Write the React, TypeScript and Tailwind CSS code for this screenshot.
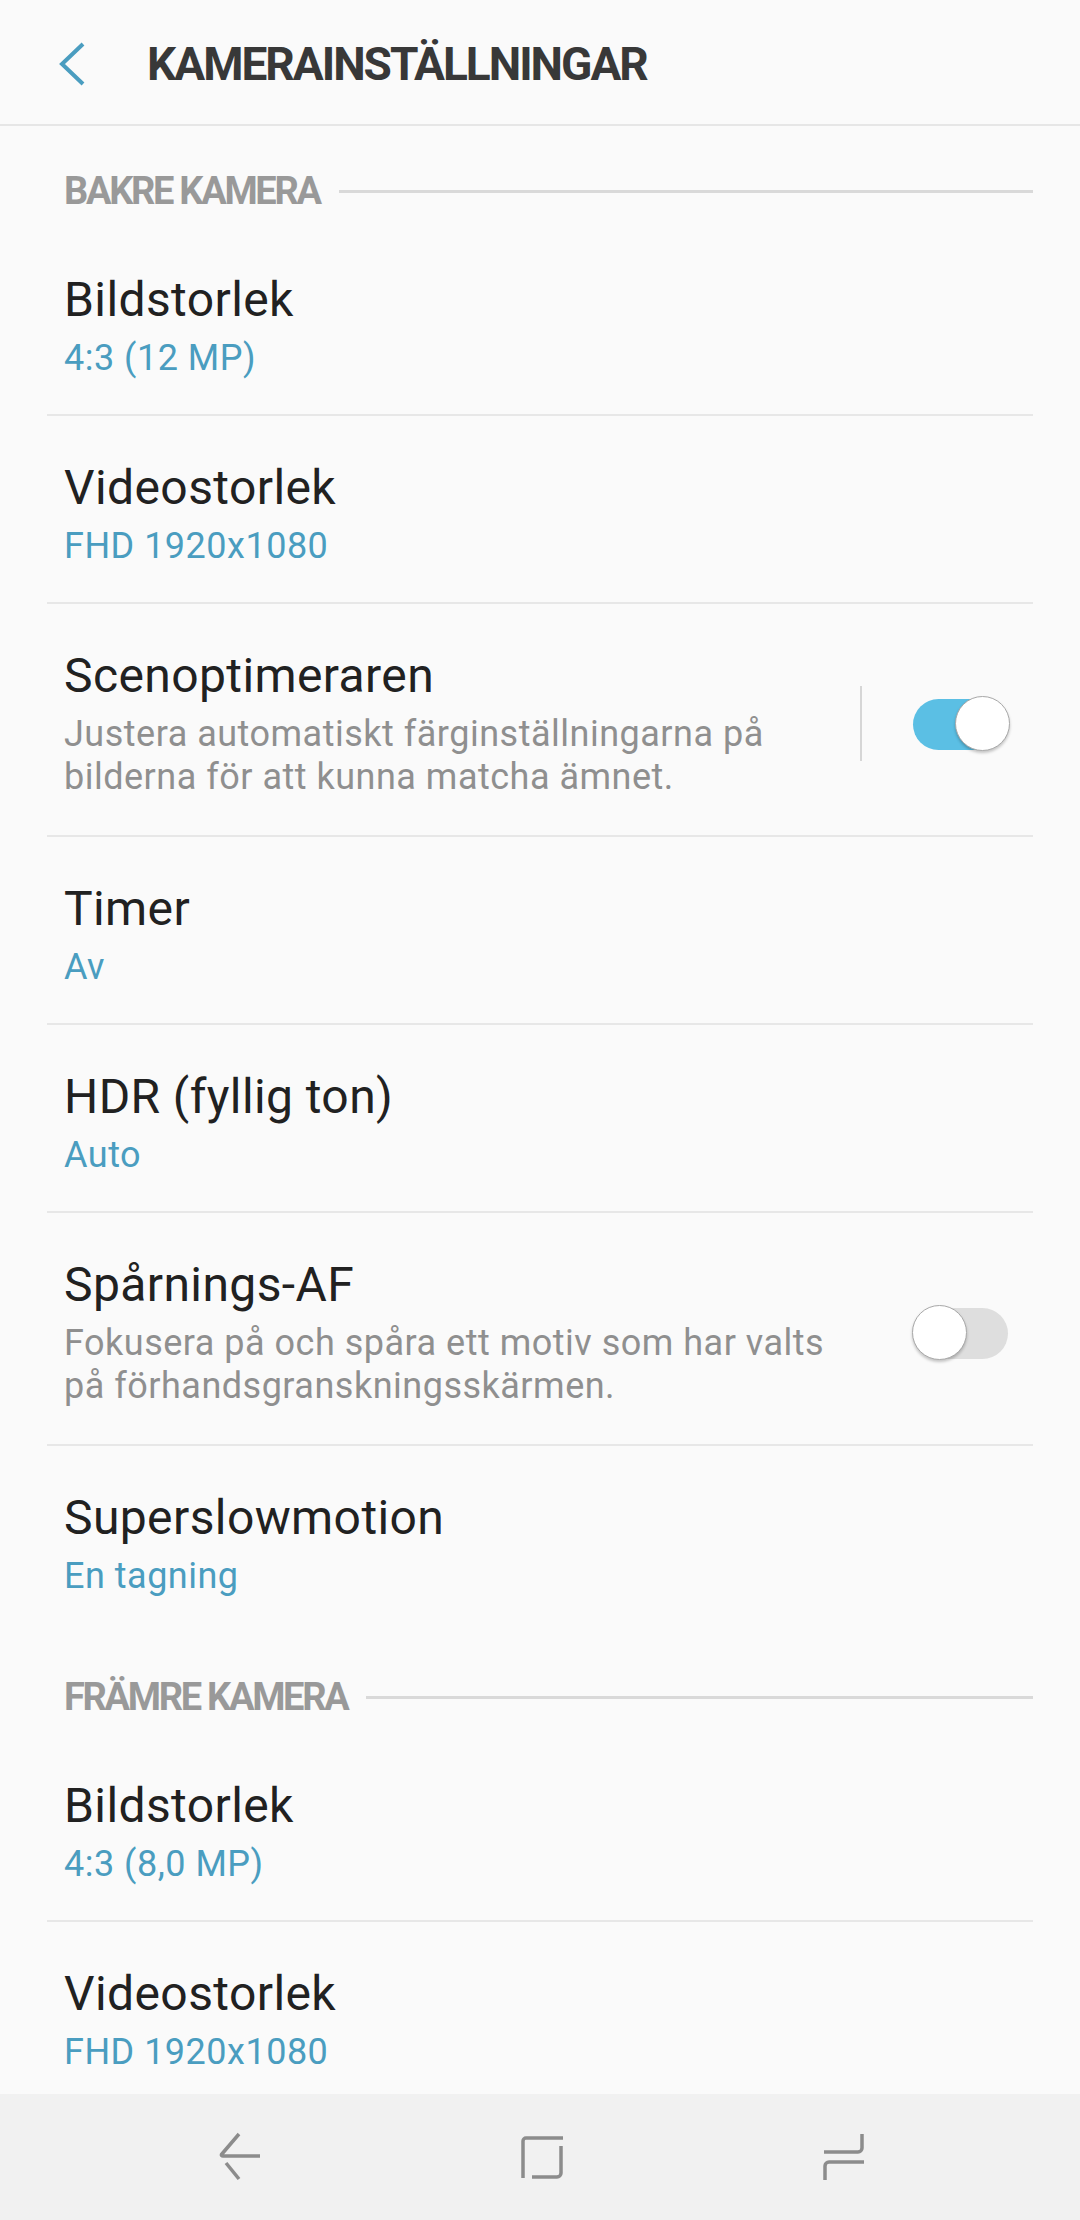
import { ReactNode } from "react";

type Row = {
  title: string;
  value?: string;
  desc?: ReactNode;
  toggle?: "on" | "off";
  separator?: boolean;
  last?: boolean;
};

const rear: Row[] = [
  { title: "Bildstorlek", value: "4:3 (12 MP)" },
  { title: "Videostorlek", value: "FHD 1920x1080" },
  {
    title: "Scenoptimeraren",
    desc: (
      <>
        Justera automatiskt färginställningarna på
        <br />
        bilderna för att kunna matcha ämnet.
      </>
    ),
    toggle: "on",
    separator: true,
  },
  { title: "Timer", value: "Av" },
  { title: "HDR (fyllig ton)", value: "Auto" },
  {
    title: "Spårnings-AF",
    desc: (
      <>
        Fokusera på och spåra ett motiv som har valts
        <br />
        på förhandsgranskningsskärmen.
      </>
    ),
    toggle: "off",
  },
  { title: "Superslowmotion", value: "En tagning", last: true },
];

const front: Row[] = [
  { title: "Bildstorlek", value: "4:3 (8,0 MP)" },
  { title: "Videostorlek", value: "FHD 1920x1080", last: true },
];

function Toggle({ on }: { on: boolean }) {
  return (
    <div className="relative w-[98px] h-[56px] shrink-0">
      <div
        className={`absolute left-[1px] right-[2px] top-[3px] bottom-[2px] rounded-full ${
          on ? "bg-[#5bbfe4]" : "bg-[#dedede]"
        }`}
      />
      <div
        className={`absolute top-0 w-[55px] h-[55px] rounded-full bg-white border border-[#a9a9a9] shadow-[0_2px_3px_rgba(0,0,0,0.22)] ${
          on ? "right-0" : "left-0"
        }`}
      />
    </div>
  );
}

function SectionHeader({ label }: { label: string }) {
  return (
    <div className="flex items-center pt-[48px] pb-[20px] pl-[64px] pr-[47px]">
      <span className="text-[38px] leading-[34px] font-bold tracking-[-2.3px] text-[#999999]">
        {label}
      </span>
      <div className="flex-1 h-[3px] bg-[#d9d9d9] ml-[19px]" />
    </div>
  );
}

function SettingRow({ row }: { row: Row }) {
  return (
    <div
      className={`mx-[47px] flex items-center pl-[17px] pr-[23px] pt-[44px] ${
        row.desc ? "pb-[36px]" : "pb-[34px]"
      } ${row.last ? "" : "border-b-2 border-[#e7e7e7]"}`}
    >
      <div className="flex-1 min-w-0">
        <div className="text-[48px] leading-[56px] tracking-[0.4px] text-[#212121]">{row.title}</div>
        {row.value && (
          <div className="mt-[9px] text-[36px] leading-[43px] tracking-[0.5px] text-[#4a9dc0]">
            {row.value}
          </div>
        )}
        {row.desc && (
          <div className="mt-[9px] text-[36px] leading-[43px] tracking-[0.5px] text-[#8f8f8f]">
            {row.desc}
          </div>
        )}
      </div>
      {row.separator && <div className="w-[2px] h-[75px] bg-[#d6d6d6] mr-[50px]" />}
      {row.toggle && <Toggle on={row.toggle === "on"} />}
    </div>
  );
}

function NavBack() {
  return (
    <svg width="44" height="50" viewBox="0 0 44 50" fill="none" stroke="#8c8c8c" strokeWidth="3.5">
      <path d="M21 2 L3.5 22.5 Q3 24 5 24 H42" />
      <path d="M8 31 L21 47" />
    </svg>
  );
}

function NavHome() {
  return (
    <svg width="44" height="50" viewBox="0 0 44 50" fill="none" stroke="#8c8c8c" strokeWidth="3.5">
      <path d="M3 46 V9 a3 3 0 0 1 3 -3 H43" />
      <path d="M41 14 V41 a4 4 0 0 1 -4 4 H12" />
    </svg>
  );
}

function NavRecents() {
  return (
    <svg width="44" height="50" viewBox="0 0 44 50" fill="none" stroke="#8c8c8c" strokeWidth="3.5">
      <path d="M40 2 V16 a4 4 0 0 1 -4 4 H2" />
      <path d="M42 30 H7 a4 4 0 0 0 -4 4 V48" />
    </svg>
  );
}

export default function App() {
  return (
    <div
      className="w-[1080px] h-[2220px] bg-[#fafafa] flex flex-col overflow-hidden"
      style={{ fontFamily: "Roboto, 'Noto Sans', sans-serif" }}
    >
      {/* Header */}
      <div className="h-[126px] shrink-0 flex items-center pt-[4px] pl-[57px] border-b-2 border-[#e6e6e6]">
        <svg width="30" height="44" viewBox="0 0 30 44" fill="none" stroke="#4a9dc0" strokeWidth="4">
          <path d="M26 2 L5 22 L26 42" />
        </svg>
        <h1 className="ml-[60px] text-[46px] leading-none font-bold tracking-[-2px] text-[#383838]">
          KAMERAINSTÄLLNINGAR
        </h1>
      </div>

      {/* Settings list */}
      <div className="flex-1 overflow-hidden">
        <SectionHeader label="BAKRE KAMERA" />
        {rear.map((row, i) => (
          <SettingRow key={"r" + i} row={row} />
        ))}
        <SectionHeader label="FRÄMRE KAMERA" />
        {front.map((row, i) => (
          <SettingRow key={"f" + i} row={row} />
        ))}
      </div>

      {/* Navigation bar */}
      <div className="h-[126px] shrink-0 bg-[#f1f1f1] flex items-center justify-center gap-[258px] pl-[4px]">
        <NavBack />
        <NavHome />
        <NavRecents />
      </div>
    </div>
  );
}
